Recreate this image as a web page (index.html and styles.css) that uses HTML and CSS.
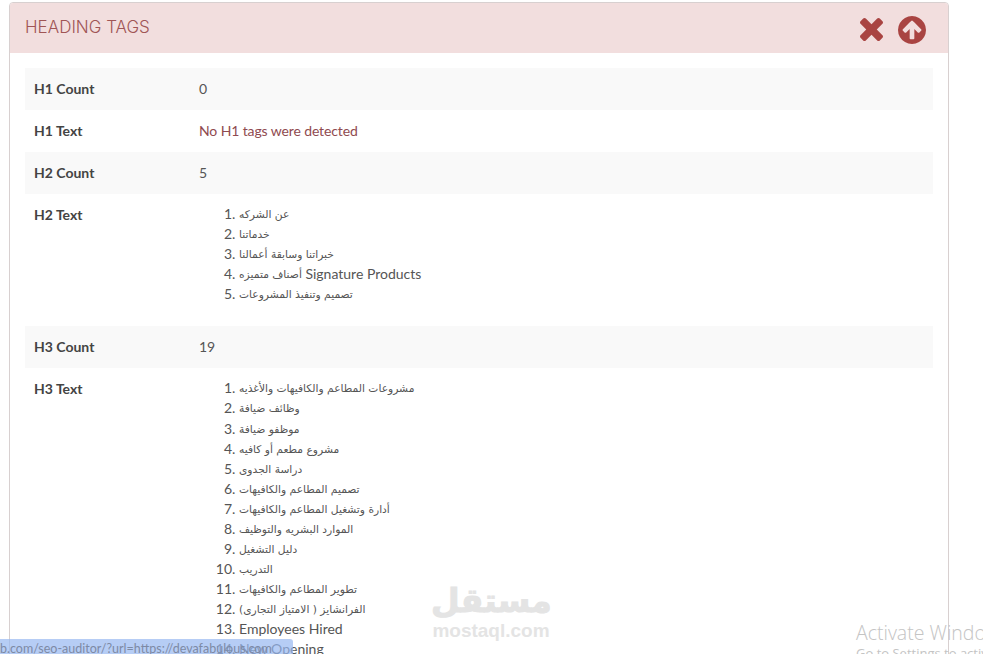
FILE: index.html
```html
<!DOCTYPE html>
<html lang="en">
<head>
  <meta charset="UTF-8">
  <meta name="viewport" content="width=device-width, initial-scale=1.0">
  <title>Heading Tags</title>
  <link rel="stylesheet" href="styles.css">
</head>
<body>
  <div class="page">
    <div class="panel">
      <div class="panel-heading">
        <h3 class="panel-title">HEADING TAGS</h3>
        <div class="panel-tools">
          <svg class="icon-close" viewBox="110 343 1188 1188" aria-hidden="true">
            <path d="M1298 1299q0 40-28 68l-136 136q-28 28-68 28t-68-28l-294-294-294 294q-28 28-68 28t-68-28l-136-136q-28-28-28-68t28-68l294-294-294-294q-28-28-28-68t28-68l136-136q28-28 68-28t68 28l294 294 294-294q28-28 68-28t68 28l136 136q28 28 28 68t-28 68l-294 294 294 294q28 28 28 68z"/>
          </svg>
          <svg class="icon-up" viewBox="0 128 1536 1536" aria-hidden="true">
            <path fill-rule="evenodd" d="M1284 895q0-27-18-45l-362-362-91-91q-18-18-45-18t-45 18l-91 91-362 362q-18 18-18 45t18 45l91 91q18 18 45 18t45-18l189-189v502q0 26 19 45t45 19h128q26 0 45-19t19-45v-502l189 189q19 19 45 19t45-19l91-91q18-18 18-45zM1536 896q0 209-103 385.500t-279.500 279.500-385.500 103-385.500-103-279.500-279.500-103-385.500 103-385.500 279.500-279.500 385.500-103 385.500 103 279.500 279.500 103 385.500z"/>
          </svg>
        </div>
      </div>
      <div class="panel-body">
        <table class="info-table">
          <tr>
            <th>H1 Count</th>
            <td>0</td>
          </tr>
          <tr>
            <th>H1 Text</th>
            <td class="text-danger">No H1 tags were detected</td>
          </tr>
          <tr>
            <th>H2 Count</th>
            <td>5</td>
          </tr>
          <tr>
            <th>H2 Text</th>
            <td>
              <ol>
                <li><span class="ar">عن الشركه</span></li>
                <li><span class="ar">خدماتنا</span></li>
                <li><span class="ar">خبراتنا وسابقة أعمالنا</span></li>
                <li><span class="ar">أصناف متميزه</span> Signature Products</li>
                <li><span class="ar">تصميم وتنفيذ المشروعات</span></li>
              </ol>
            </td>
          </tr>
          <tr>
            <th>H3 Count</th>
            <td>19</td>
          </tr>
          <tr>
            <th>H3 Text</th>
            <td>
              <ol>
                <li><span class="ar">مشروعات المطاعم والكافيهات والأغذيه</span></li>
                <li><span class="ar">وظائف ضيافة</span></li>
                <li><span class="ar">موظفو ضيافة</span></li>
                <li><span class="ar">مشروع مطعم أو كافيه</span></li>
                <li><span class="ar">دراسة الجدوى</span></li>
                <li><span class="ar">تصميم المطاعم والكافيهات</span></li>
                <li><span class="ar">أدارة وتشغيل المطاعم والكافيهات</span></li>
                <li><span class="ar">الموارد البشريه والتوظيف</span></li>
                <li><span class="ar">دليل التشغيل</span></li>
                <li><span class="ar">التدريب</span></li>
                <li><span class="ar">تطوير المطاعم والكافيهات</span></li>
                <li><span class="ar">الفرانشايز ( الامتياز التجارى)</span></li>
                <li>Employees Hired</li>
                <li>New Opening</li>
              </ol>
            </td>
          </tr>
        </table>
      </div>
    </div>
  </div>

  <div class="watermark">
    <div class="watermark-logo">مستقل</div>
    <div class="watermark-url">mostaql.com</div>
  </div>

  <div class="activate">
    <div class="activate-title">Activate Windows</div>
    <div class="activate-sub">Go to Settings to activate Windows.</div>
  </div>

  <div class="status-bar">b.com/seo-auditor/?url=https://devafabulous.com</div>
</body>
</html>
```

FILE: styles.css
```css
html, body {
  margin: 0;
  padding: 0;
  height: 100%;
  overflow: hidden;
  background-color: white;
}
body {
  font-family: Lato, 'DejaVu Sans', sans-serif;
  font-size: 14px;
  color: #555;
}
.page {
  height: 654px;
  overflow: hidden;
  padding: 2px 34px 0 9px;
  box-sizing: border-box;
}
.panel {
  border: 1px solid #d8d0d0;
  border-radius: 4px;
  background-color: white;
}
.panel-heading {
  display: flex;
  justify-content: space-between;
  align-items: center;
  height: 50px;
  padding: 0 15px;
  background-color: #f2dede;
  border-radius: 3px 3px 0 0;
}
.panel-title {
  margin: 0 0 2px;
  font-family: Inter, 'Open Sans', sans-serif;
  font-size: 17px;
  font-weight: 300;
  color: #a05555;
}
.panel-tools {
  display: flex;
  align-items: center;
  gap: 15px;
  margin-top: 3px;
  margin-right: 7px;
}
.panel-tools svg {
  display: block;
  fill: #a94442;
}
.icon-close {
  width: 23px;
  height: 23px;
}
.icon-up {
  width: 28px;
  height: 28px;
}
.panel-body {
  padding: 15px 15px 40px;
}
.info-table {
  width: 100%;
  border-collapse: collapse;
}
.info-table tr:nth-child(odd) {
  background-color: #f9f9f9;
}
.info-table th,
.info-table td {
  padding: 10px 9px;
  line-height: 22px;
  text-align: left;
  vertical-align: top;
}
.info-table th {
  width: 147px;
  color: #444;
}
.text-danger {
  color: #8f4a4f;
  letter-spacing: -0.12px;
}
ol {
  margin: 0 0 12px;
  padding-left: 40px;
}
li {
  line-height: 20.08px;
}
.ar {
  font-family: 'DejaVu Sans', sans-serif;
  font-size: 10.7px;
  line-height: 1;
  vertical-align: 1px;
}
.watermark {
  position: absolute;
  left: 431px;
  top: 582px;
  width: 120px;
  text-align: center;
  color: #e4e4e4;
}
.watermark-logo {
  font-family: 'DejaVu Sans', sans-serif;
  font-size: 33px;
  font-weight: bold;
  line-height: 38px;
  -webkit-text-stroke: 1px #e4e4e4;
}
.watermark-url {
  font-family: 'Liberation Sans', sans-serif;
  font-size: 19px;
  font-weight: bold;
  line-height: 22px;
}
.activate {
  position: absolute;
  left: 856px;
  top: 622px;
  width: 300px;
  color: #c4c4c4;
  font-family: 'Open Sans', sans-serif;
}
.activate-title {
  font-size: 19.5px;
  font-weight: 300;
  line-height: 22px;
}
.activate-sub {
  font-size: 13px;
  line-height: 18px;
}
.status-bar {
  position: absolute;
  left: 0;
  bottom: 0;
  width: 293px;
  height: 15px;
  overflow: hidden;
  background-color: rgba(151, 184, 241, 0.7);
  border-radius: 0 3px 0 0;
  font-size: 12.5px;
  line-height: 20px;
  color: #7d8aa5;
  white-space: nowrap;
}
```
